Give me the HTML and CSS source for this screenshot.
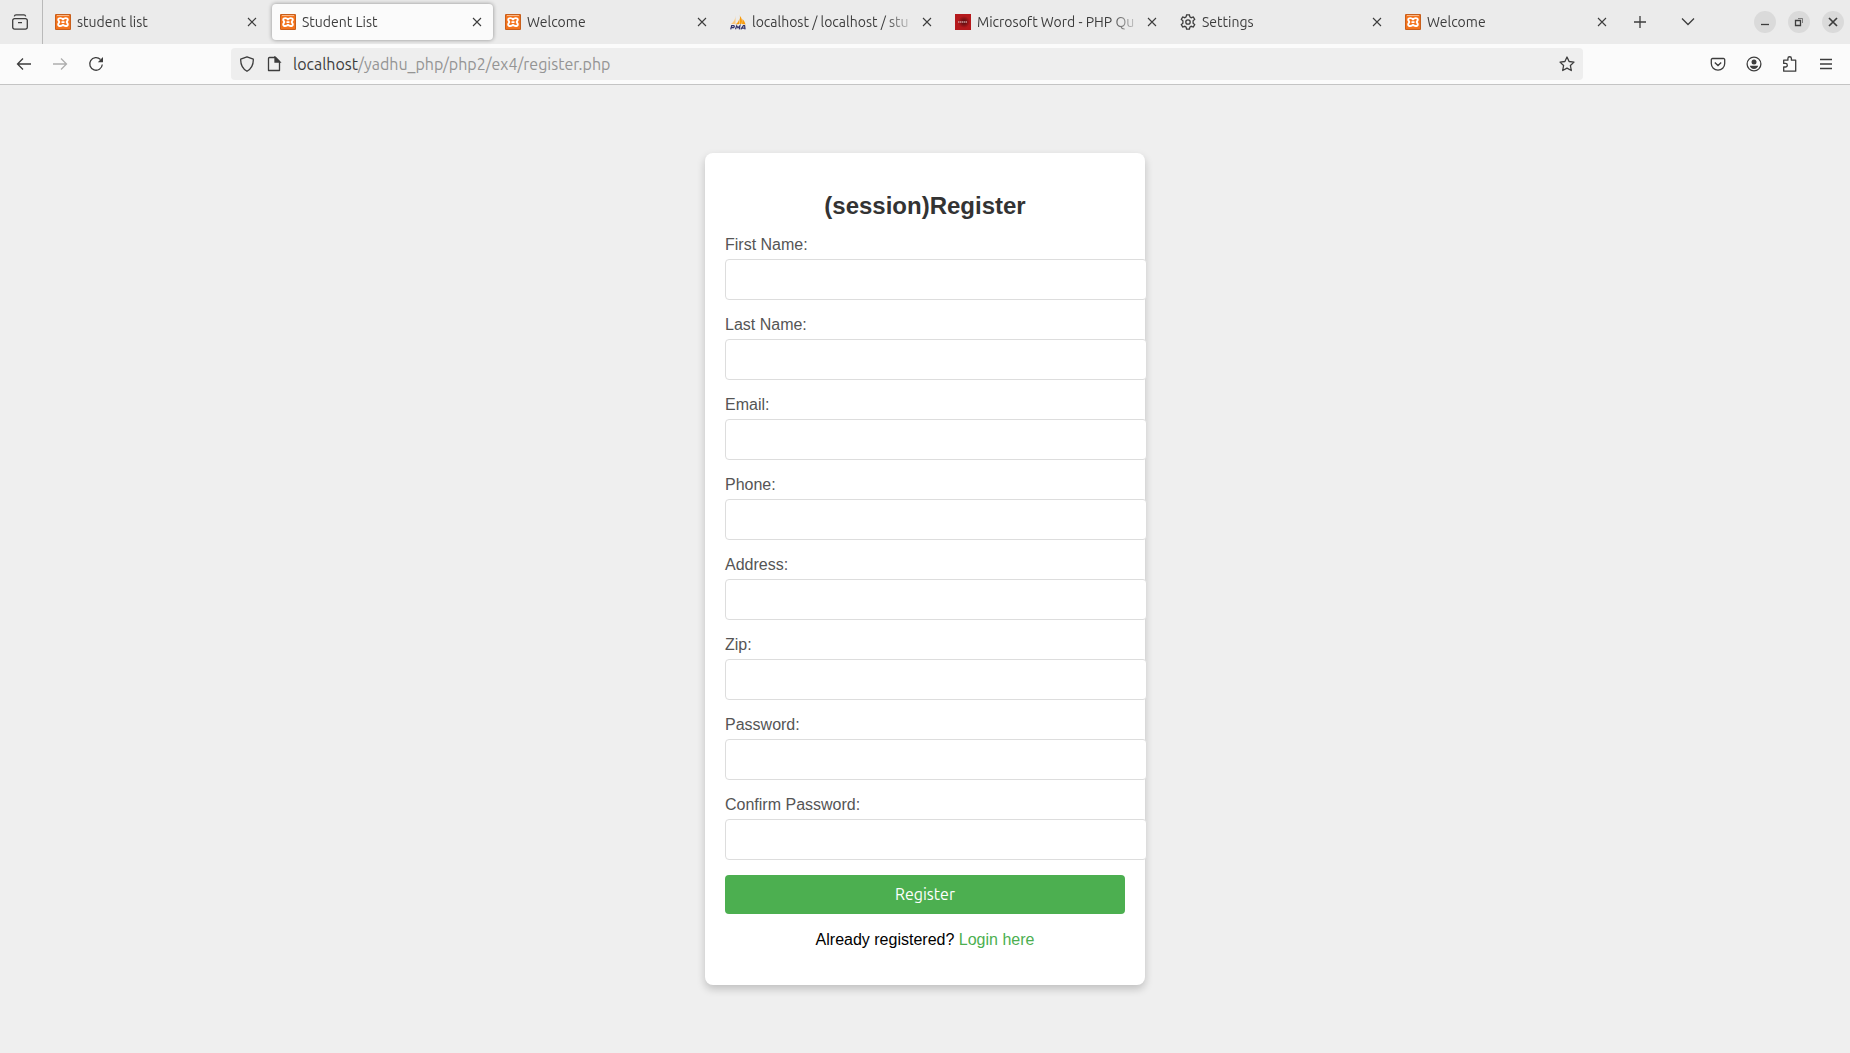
FILE: index.html
```html
<!DOCTYPE html>
<html lang="en">
<head>
<meta charset="utf-8">
<title>Student List</title>
<link rel="stylesheet" href="styles.css">
</head>
<body>
<svg class="defs" aria-hidden="true">
  <defs>
    <symbol id="xampp" viewBox="0 0 16 16">
      <rect width="16" height="16" rx="1" fill="#c85f1c"/>
      <rect x="1" y="1" width="14" height="14" fill="#f4731c"/>
      <path d="M2 1.500h12" stroke="#f9b98a" stroke-width="1"/>
      <path d="M8 5.400C7 4 3.200 3.400 3.200 5.800C3.200 7 4.300 7.300 4.300 8C4.300 8.700 3.200 9 3.200 10.400C3.200 12.800 7 12.200 8 10.800C9 12.200 12.800 12.800 12.800 10.400C12.800 9 11.700 8.700 11.700 8C11.700 7.300 12.800 7 12.800 5.800C12.800 3.400 9 4 8 5.400ZM6.500 8.100h3" fill="none" stroke="#fff" stroke-width="1.900" stroke-linejoin="round"/>
    </symbol>
    <symbol id="close" viewBox="0 0 10 10">
      <path d="M1 1l8 8M9 1L1 9" fill="none" stroke="currentColor" stroke-width="1.100"/>
    </symbol>
  </defs>
</svg>

<header class="browser">
  <div class="tabstrip">
    <button class="view-button" type="button" aria-label="Firefox View">
      <svg class="icon" viewBox="0 0 16 16"><path d="M2.500 4.700h11a1.800 1.800 0 0 1 1.800 1.800v6.800a1.800 1.800 0 0 1-1.800 1.800h-11A1.800 1.800 0 0 1 .7 13.300V6.500A1.800 1.800 0 0 1 2.500 4.700zM2.300 2.400C2.600 1.200 3 .9 4 .9h8c1 0 1.400.3 1.700 1.500M6 8.700h4"/></svg>
    </button>
    <nav class="tabs">
      <div class="tab"><svg class="favicon"><use href="#xampp"/></svg><span class="tab-title">student list</span><button class="tab-close" type="button" aria-label="Close tab"><svg><use href="#close"/></svg></button></div>
      <div class="tab active"><svg class="favicon"><use href="#xampp"/></svg><span class="tab-title">Student List</span><button class="tab-close" type="button" aria-label="Close tab"><svg><use href="#close"/></svg></button></div>
      <div class="tab"><svg class="favicon"><use href="#xampp"/></svg><span class="tab-title">Welcome</span><button class="tab-close" type="button" aria-label="Close tab"><svg><use href="#close"/></svg></button></div>
      <div class="tab"><svg class="favicon" viewBox="0 0 16 16"><path d="M5.500 1.500C5.500 5 4 8 1 10h4.500z" fill="#fbc77d"/><path d="M9.500 .5C10 4 9 8 5.500 10.500l4-.5z" fill="#f89c0e"/><path d="M10 2c2 2 2.500 5 1.500 8H10zM12.500 5C14 6.500 15 8.500 15.500 10.500L12 10z" fill="#f89c0e"/><path d="M.7 15.300l1-3.600h2.200q1 1-.4 2H1.400M5.500 15.300l1.200-3.500 1.200 2 2-2-.6 3.500M10.800 15.300l2.600-3.600h1.200l.5 3.600M12 14.200h3" fill="none" stroke="#34346b" stroke-width="1.200"/></svg><span class="tab-title">localhost / localhost / stu</span><button class="tab-close" type="button" aria-label="Close tab"><svg><use href="#close"/></svg></button></div>
      <div class="tab"><svg class="favicon" viewBox="0 0 16 16"><defs><radialGradient id="glow"><stop offset="0" stop-color="#4e0b0d"/><stop offset="1" stop-color="#b5191c"/></radialGradient></defs><rect width="16" height="16" fill="#b5191c"/><circle cx="9" cy="8" r="6" fill="url(#glow)"/><path d="M3 8h9" stroke="#c99" stroke-width="1.500" stroke-dasharray="1.500 .5"/></svg><span class="tab-title">Microsoft Word - PHP Qu</span><button class="tab-close" type="button" aria-label="Close tab"><svg><use href="#close"/></svg></button></div>
      <div class="tab"><svg class="favicon icon" viewBox="0 0 16 16"><circle cx="8" cy="8" r="2.200"/><path d="M6.600 .8h2.800l.5 2.100 1.300.8 2.100-.7 1.400 2.400-1.600 1.500v2.200l1.600 1.500-1.400 2.400-2.100-.7-1.300.8-.5 2.100H6.600l-.5-2.100-1.300-.8-2.100.7-1.400-2.400 1.600-1.500V6.900L1.300 5.400 2.700 3l2.100.7 1.300-.8z"/></svg><span class="tab-title">Settings</span><button class="tab-close" type="button" aria-label="Close tab"><svg><use href="#close"/></svg></button></div>
      <div class="tab"><svg class="favicon"><use href="#xampp"/></svg><span class="tab-title">Welcome</span><button class="tab-close" type="button" aria-label="Close tab"><svg><use href="#close"/></svg></button></div>
    </nav>
    <button class="tool new-tab" type="button" aria-label="New tab"><svg class="icon" viewBox="0 0 16 16"><path d="M8 2v12M2 8h12"/></svg></button>
    <button class="tool list-tabs" type="button" aria-label="List all tabs"><svg class="icon" viewBox="0 0 16 16"><path d="M2 4.500l6 6 6-6"/></svg></button>
    <div class="window-buttons">
      <button type="button" aria-label="Minimize"><svg class="icon" viewBox="0 0 16 16"><path d="M4 10.500h8"/></svg></button>
      <button type="button" aria-label="Restore"><svg class="icon" viewBox="0 0 16 16"><path d="M4.500 6.500h5v5h-5z"/><path d="M7 4.500h4.500V9" stroke-width="1" opacity=".6"/></svg></button>
      <button type="button" aria-label="Close"><svg class="icon" viewBox="0 0 16 16"><path d="M4 4l8 8M12 4l-8 8" stroke-width="1.700"/></svg></button>
    </div>
  </div>

  <div class="toolbar">
    <button class="tool" type="button" aria-label="Back"><svg class="icon" viewBox="0 0 16 16"><path d="M15 8H1.500M7 2.500L1.500 8 7 13.500"/></svg></button>
    <button class="tool" type="button" aria-label="Forward" disabled><svg class="icon" viewBox="0 0 16 16"><path d="M1 8h13.500M9 2.500L14.500 8 9 13.500"/></svg></button>
    <button class="tool" type="button" aria-label="Reload"><svg class="icon" viewBox="0 0 16 16"><path d="M14.300 8.500A6.300 6.300 0 1 1 12.500 3.500"/><path d="M15 1v5.200H9.800z" fill="currentColor" stroke="none"/></svg></button>
    <div class="spacer"></div>
    <div class="urlbar">
      <svg class="icon" viewBox="0 0 16 16"><path d="M8 .8L14.300 3.200C14.500 8.500 12.500 12.500 8 15.300 3.500 12.500 1.500 8.500 1.700 3.200z" stroke-linejoin="round"/></svg>
      <svg class="icon" viewBox="0 0 16 16"><path d="M3.500 1.500h6l4 4v9h-11v-12a1 1 0 0 1 1-1z" stroke-linejoin="round"/><path d="M9 1v5h5z" fill="currentColor"/></svg>
      <span class="url"><b>localhost</b>/yadhu_php/php2/ex4/register.php</span>
      <button class="star" type="button" aria-label="Bookmark this page"><svg class="icon" viewBox="0 0 16 16"><path d="M8 1l2.100 4.500 4.900.6-3.600 3.400.9 5L8 12.100l-4.300 2.400.9-5L1 6.100l4.900-.6z" stroke-linejoin="round"/></svg></button>
    </div>
    <div class="spacer"></div>
    <button class="tool" type="button" aria-label="Save to Pocket"><svg class="icon" viewBox="0 0 16 16"><path d="M2.500 2.500h11a1.200 1.200 0 0 1 1.200 1.200V7.500a6.700 6.700 0 0 1-13.400 0V3.700a1.200 1.200 0 0 1 1.200-1.200zM4.800 6.500L8 9.500l3.200-3"/></svg></button>
    <button class="tool" type="button" aria-label="Account"><svg class="icon" viewBox="0 0 16 16"><circle cx="8" cy="8" r="6.900"/><circle cx="8" cy="6" r="2.500" fill="currentColor" stroke="none"/><path d="M3.800 9.800h8.400c-.5 2-2 3.200-4.200 3.200s-3.700-1.200-4.200-3.200z" fill="currentColor" stroke="none"/></svg></button>
    <button class="tool" type="button" aria-label="Extensions"><svg class="icon" viewBox="0 0 16 16"><path d="M1.700 15.200V11h1.800a1.700 1.700 0 0 0 0-3.600H1.700V4.200h4.200V2.500a1.700 1.700 0 0 1 3.500 0v1.700h4.300v11z" stroke-linejoin="round"/></svg></button>
    <button class="tool" type="button" aria-label="Menu"><svg class="icon" viewBox="0 0 16 16"><path d="M2 3.500h12M2 8h12M2 12.500h12"/></svg></button>
  </div>
</header>

<main>
  <form class="card">
    <h2>(session)Register</h2>
    <label for="first">First Name:</label>
    <input id="first" type="text">
    <label for="last">Last Name:</label>
    <input id="last" type="text">
    <label for="email">Email:</label>
    <input id="email" type="email">
    <label for="phone">Phone:</label>
    <input id="phone" type="text">
    <label for="address">Address:</label>
    <input id="address" type="text">
    <label for="zip">Zip:</label>
    <input id="zip" type="text">
    <label for="password">Password:</label>
    <input id="password" type="password">
    <label for="confirm">Confirm Password:</label>
    <input id="confirm" type="password">
    <button class="submit" type="submit">Register</button>
    <p>Already registered? <a href="login.php">Login here</a></p>
  </form>
</main>
</body>
</html>
```

FILE: styles.css
```css
* {
  box-sizing: border-box;
}

body {
  margin: 0;
  min-height: 100vh;
  display: flex;
  flex-direction: column;
  background: #efefef;
  font: 16px/19px "Liberation Sans", Arial, sans-serif;
}

.defs {
  position: absolute;
  width: 0;
  height: 0;
}

button {
  padding: 0;
  border: 0;
  background: none;
  color: inherit;
  font: inherit;
}

/* Browser chrome */
.browser {
  color: #3d3d3d;
  background: #fbfbfb;
  border-bottom: 1px solid #c4c4c4;
  font: 14px/20px Ubuntu, "Noto Sans", sans-serif;
}

.icon {
  width: 16px;
  height: 16px;
  flex: none;
  display: block;
  fill: none;
  stroke: currentColor;
  stroke-width: 1.300;
}

.tabstrip {
  display: flex;
  align-items: center;
  height: 44px;
  padding-right: 6px;
  background: #ebebeb;
}

.view-button {
  align-self: stretch;
  flex: none;
  width: 43px;
  padding-left: 12px;
  border-right: 1px solid #b9b9b9;
}

.tabs {
  display: flex;
  flex: 0 1 1577px;
  min-width: 0;
  padding-left: 2px;
}

.tab {
  display: flex;
  flex: 1 1 0;
  min-width: 0;
  height: 36px;
  margin: 0 2px;
  padding: 0 6px 0 8px;
  align-items: center;
  border-radius: 4px;
}

.tab.active {
  background: #fbfbfb;
  box-shadow: 0 0 4px rgba(0, 0, 0, .4);
}

.favicon {
  flex: none;
  width: 16px;
  height: 16px;
  margin-right: 6px;
}

.tab-title {
  flex: 1;
  min-width: 0;
  overflow: hidden;
  white-space: nowrap;
  mask-image: linear-gradient(to left, transparent, #000 32px);
}

.tab-close {
  display: grid;
  place-items: center;
  flex: none;
  width: 20px;
  height: 24px;
}

.tab-close svg {
  width: 10px;
  height: 10px;
}

.tool {
  display: grid;
  place-items: center;
  flex: none;
  width: 36px;
  height: 32px;
}

.tool:disabled {
  opacity: .4;
}

.new-tab {
  margin-left: 2px;
}

.list-tabs {
  margin-left: 12px;
}

.window-buttons {
  display: flex;
  gap: 12px;
  margin-left: auto;
}

.window-buttons button {
  display: grid;
  place-items: center;
  width: 22px;
  height: 22px;
  border-radius: 50%;
  background: #dadada;
}

.toolbar {
  display: flex;
  align-items: center;
  height: 40px;
  padding: 0 6px;
}

.spacer {
  flex: 117 1 0;
}

.urlbar {
  display: flex;
  align-items: center;
  flex: 1336 1 0;
  height: 32px;
  padding: 0 8px;
  gap: 11px;
  border-radius: 4px;
  background: #eee;
}

.url {
  flex: 1;
  color: #949494;
  font-size: 16px;
}

.url b {
  color: #3d3d3d;
  font-weight: 400;
}

/* Registration form */
main {
  flex: 1;
  display: flex;
  align-items: center;
  justify-content: center;
}

.card {
  width: 440px;
  padding: 20px;
  border-radius: 8px;
  background: #fff;
  box-shadow: 0 4px 8px rgba(0, 0, 0, .2);
}

h2 {
  margin: 19px 0 16px;
  color: #333;
  font-size: 24px;
  line-height: 27px;
  text-align: center;
}

label {
  display: block;
  margin-bottom: 5px;
  color: #555;
}

input {
  display: block;
  box-sizing: content-box;
  width: 100%;
  height: 19px;
  margin: 0 0 15px;
  padding: 10px;
  border: 1px solid #ddd;
  border-radius: 4px;
  background: #fff;
  font: inherit;
}

.submit {
  display: block;
  width: 100%;
  height: 39px;
  border-radius: 4px;
  background: #4caf50;
  color: #fff;
  font: 16px/19px Ubuntu, "Noto Sans", sans-serif;
}

.card p {
  margin: 16px 0;
  text-align: center;
}

.card a {
  color: #4caf50;
  text-decoration: none;
}
```
